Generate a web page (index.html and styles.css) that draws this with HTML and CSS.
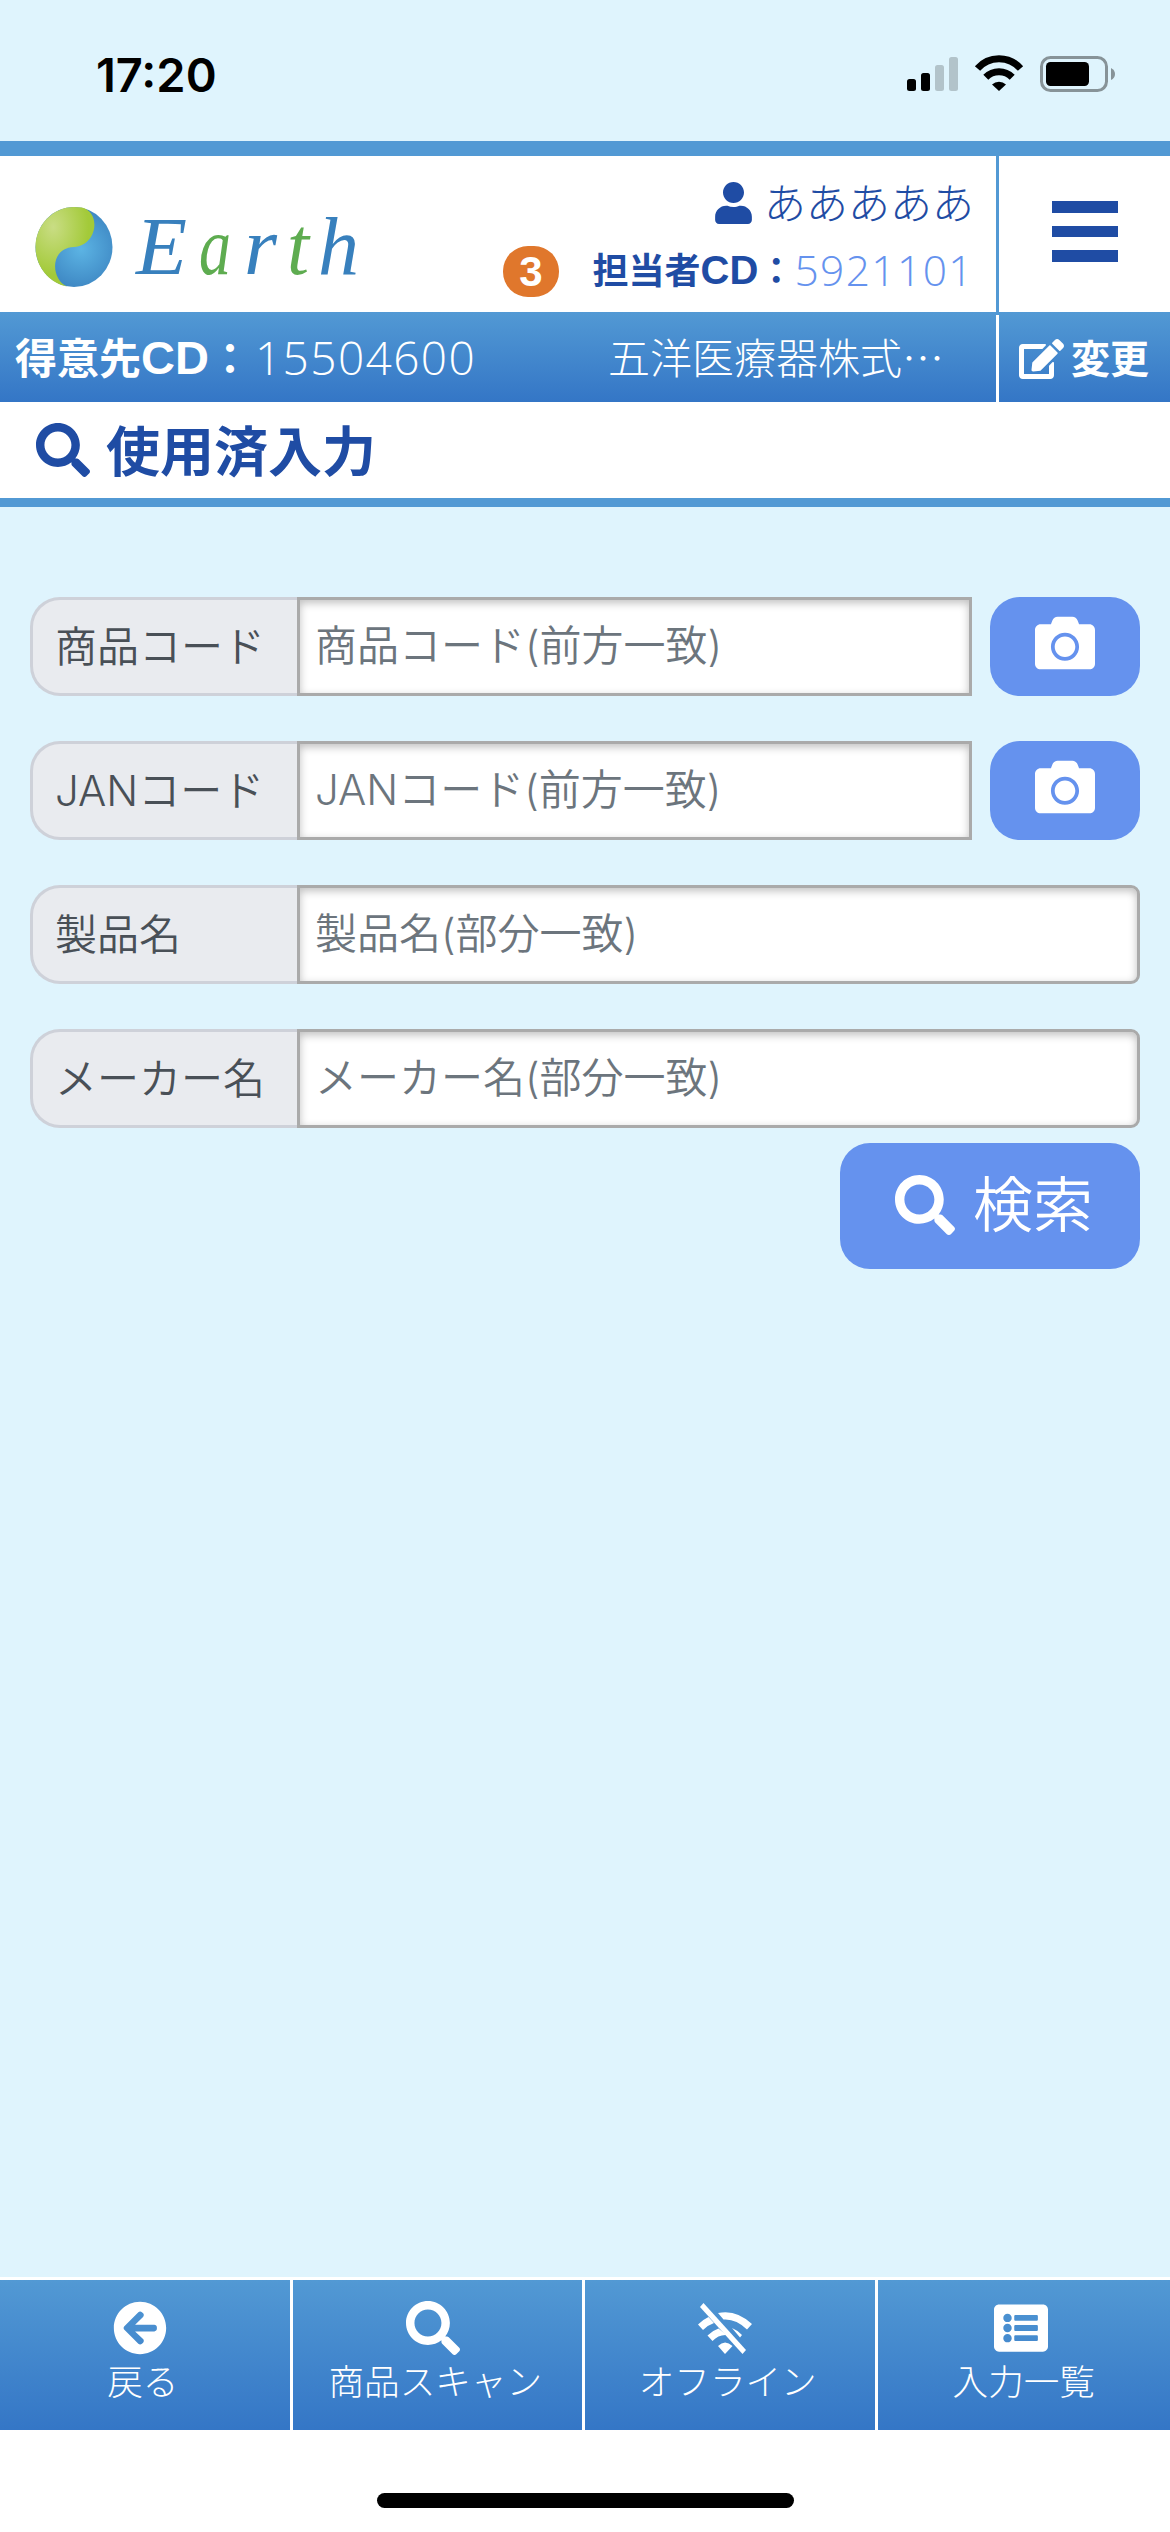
FILE: index.html
```html
<!DOCTYPE html>
<html lang="ja">
<head>
    <meta charset="UTF-8">
    <meta name="viewport" content="width=device-width, initial-scale=1.0">
    <title>使用済入力</title>
    <link rel="stylesheet" href="styles.css">
</head>
<body>
    <!-- shared icons -->
    <svg class="icon-defs" width="0" height="0">
        <symbol id="i-search" viewBox="0 0 512 512"><path d="M505 442.7L405.3 343c-4.5-4.5-10.6-7-17-7H372c27.6-35.3 44-79.7 44-128C416 93.1 322.9 0 208 0S0 93.1 0 208s93.1 208 208 208c48.3 0 92.7-16.4 128-44v16.3c0 6.4 2.5 12.5 7 17l99.7 99.7c9.4 9.4 24.6 9.4 33.9 0l28.3-28.3c9.4-9.4 9.4-24.6.1-34zM208 336c-70.7 0-128-57.2-128-128 0-70.7 57.2-128 128-128 70.7 0 128 57.2 128 128 0 70.7-57.2 128-128 128z"/></symbol>
        <symbol id="i-camera" viewBox="0 0 512 512"><path d="M512 144v288c0 26.5-21.5 48-48 48H48c-26.5 0-48-21.5-48-48V144c0-26.5 21.5-48 48-48h88l12.3-32.9c7-18.7 24.9-31.1 44.9-31.1h125.5c20 0 37.9 12.4 44.9 31.1L376 96h88c26.5 0 48 21.5 48 48zM376 288c0-66.2-53.8-120-120-120s-120 53.8-120 120 53.8 120 120 120 120-53.8 120-120zm-32 0c0 48.5-39.5 88-88 88s-88-39.5-88-88 39.5-88 88-88 88 39.5 88 88z"/></symbol>
    </svg>

    <div class="status-bar">
        <span class="time">17:20</span>
        <svg class="status-icons" width="209" height="38" viewBox="0 0 209 38">
            <rect x="0" y="24" width="9" height="12" rx="2.5"/>
            <rect x="14" y="18" width="9" height="18" rx="2.5"/>
            <g fill="#b2c3ca">
                <rect x="28" y="10" width="9" height="26" rx="2.5"/>
                <rect x="42" y="2" width="9" height="34" rx="2.5"/>
            </g>
            <g fill="none" stroke="#000" stroke-width="7">
                <path d="M70.5 13.5a28.5 28.5 0 0 1 43 0"/>
                <path d="M78.8 22.3a18.5 18.5 0 0 1 26.4 0"/>
            </g>
            <path d="M85 29.5a10.5 10.5 0 0 1 14 0L92 36z"/>
            <rect x="134.5" y="2.5" width="65" height="33" rx="9" fill="none" stroke="#879398" stroke-width="3"/>
            <rect x="139" y="7" width="43" height="24" rx="4.5"/>
            <path d="M204 13q4 2 4 6t-4 6z" fill="#879398"/>
        </svg>
    </div>

    <header class="header">
        <div class="brand">
            <svg width="340" height="100" viewBox="0 -5 340 100">
                <defs>
                    <radialGradient id="leaf" cx="0.3" cy="0.25" r="0.6">
                        <stop offset="0" stop-color="#c9dd84"/>
                        <stop offset="1" stop-color="#a3ca39"/>
                    </radialGradient>
                    <radialGradient id="sea" gradientUnits="userSpaceOnUse" cx="46" cy="44" r="44">
                        <stop offset="0" stop-color="#5cb4e4"/>
                        <stop offset="1" stop-color="#3b83c0"/>
                    </radialGradient>
                </defs>
                <ellipse cx="39" cy="42" rx="38.5" ry="40" fill="url(#sea)"/>
                <path d="M39 2C18 2 .5 20 .5 42c0 20 14 36 31.5 39.5C16 75 14 43 39 42c24-2 27-35 8-39.5Q43 2 39 2z" fill="url(#leaf)"/>
                <g class="brand-text">
                    <text x="101" y="69" textLength="51" lengthAdjust="spacingAndGlyphs">E</text>
                    <text x="164" y="69" textLength="32" lengthAdjust="spacingAndGlyphs" class="green">a</text>
                    <text x="209" y="69" textLength="33" lengthAdjust="spacingAndGlyphs">r</text>
                    <text x="252" y="69" textLength="22" lengthAdjust="spacingAndGlyphs" class="green">t</text>
                    <text x="283" y="69" textLength="41" lengthAdjust="spacingAndGlyphs">h</text>
                </g>
            </svg>
        </div>
        <span class="badge">3</span>
        <div class="user">
            <div class="user-name">
                <svg width="37" height="42" viewBox="0 0 448 512"><path d="M224 256c70.7 0 128-57.3 128-128S294.7 0 224 0 96 57.3 96 128s57.3 128 128 128zm89.6 32h-16.7c-22.2 10.2-46.9 16-72.9 16s-50.6-5.8-72.9-16h-16.7C60.2 288 0 348.2 0 422.4V464c0 26.5 21.5 48 48 48h352c26.5 0 48-21.5 48-48v-41.6c0-74.2-60.2-134.4-134.4-134.4z"/></svg>
                <span>あああああ</span>
            </div>
            <div class="user-code">
                <b>担当者<span class="cd">CD</span>：</b><span class="num">5921101</span>
            </div>
        </div>
        <button class="menu"><i></i><i></i><i></i></button>
    </header>

    <div class="customer">
        <div class="customer-code"><b>得意先<span class="cd">CD</span>：</b><span class="num">15504600</span></div>
        <div class="customer-name">五洋医療器株式…</div>
        <button class="change">
            <svg width="45" height="40" viewBox="0 0 576 512"><path d="M402.6 83.2l90.2 90.2c3.8 3.8 3.8 10 0 13.8L274.4 405.6l-92.8 10.3c-12.4 1.4-22.9-9.1-21.5-21.5l10.3-92.8L388.8 83.2c3.8-3.8 10-3.8 13.8 0zm162-22.9l-48.8-48.8c-15.2-15.2-39.9-15.2-55.2 0l-35.4 35.4c-3.8 3.8-3.8 10 0 13.8l90.2 90.2c3.8 3.8 10 3.8 13.8 0l35.4-35.4c15.2-15.3 15.2-40 0-55.2zM384 346.2V448H64V128h229.8c3.2 0 6.2-1.3 8.5-3.5l40-40c7.6-7.6 2.2-20.5-8.5-20.5H48C21.5 64 0 85.5 0 112v352c0 26.5 21.5 48 48 48h352c26.5 0 48-21.5 48-48V306.2c0-10.7-12.9-16-20.5-8.5l-40 40c-2.2 2.3-3.5 5.3-3.5 8.5z"/></svg>
            <span>変更</span>
        </button>
    </div>

    <h1 class="title">
        <svg width="54" height="54"><use href="#i-search"/></svg>
        <span>使用済入力</span>
    </h1>

    <main class="form">
        <div class="row">
            <label for="itemCode">商品コード</label>
            <input type="text" id="itemCode" placeholder="商品コード(前方一致)">
            <button class="scan"><svg width="60" height="60"><use href="#i-camera"/></svg></button>
        </div>
        <div class="row">
            <label for="janCode">JANコード</label>
            <input type="text" id="janCode" placeholder="JANコード(前方一致)">
            <button class="scan"><svg width="60" height="60"><use href="#i-camera"/></svg></button>
        </div>
        <div class="row">
            <label for="itemName">製品名</label>
            <input type="text" id="itemName" class="last" placeholder="製品名(部分一致)">
        </div>
        <div class="row">
            <label for="maker">メーカー名</label>
            <input type="text" id="maker" class="last" placeholder="メーカー名(部分一致)">
        </div>
        <button class="search">
            <svg width="60" height="60"><use href="#i-search"/></svg>
            <span>検索</span>
        </button>
    </main>

    <nav class="tabs">
        <a class="tab">
            <svg width="54" height="54" viewBox="0 0 512 512"><path d="M256 504C119 504 8 393 8 256S119 8 256 8s248 111 248 248-111 248-248 248zm28.9-143.6L209.4 288H392c13.3 0 24-10.7 24-24v-16c0-13.3-10.7-24-24-24H209.4l75.5-72.4c9.7-9.3 9.9-24.8.4-34.3l-11-10.9c-9.4-9.4-24.6-9.4-33.9 0L107.7 239c-9.4 9.4-9.4 24.6 0 33.9l132.7 132.7c9.4 9.4 24.6 9.4 33.9 0l11-10.9c9.5-9.5 9.3-25-.4-34.3z"/></svg>
            <span>戻る</span>
        </a>
        <a class="tab">
            <svg width="54" height="54"><use href="#i-search"/></svg>
            <span>商品スキャン</span>
        </a>
        <a class="tab">
            <svg width="54" height="54" viewBox="0 0 54 54">
                <path d="M20 12Q38 8 54 23l-5 5.500Q38 17.500 25.500 18.500z"/>
                <path d="M0 23.500q5-5 10.500-7.500l5.500 6q-6 2-11 7z"/>
                <path d="M9.500 34.500q5-5 11-7l8 6.500q-8-.5-14 6z"/>
                <path d="M34 27q6 2.500 10 7l-2 2.500zM20 45q7-7 14.500 0l-7.500 8z"/>
                <path d="M2 6l3.500-4L48 49l-3.500 4z"/>
            </svg>
            <span>オフライン</span>
        </a>
        <a class="tab">
            <svg width="54" height="54" viewBox="0 0 512 512"><path d="M464 480H48c-26.5 0-48-21.5-48-48V80c0-26.5 21.5-48 48-48h416c26.5 0 48 21.5 48 48v352c0 26.5-21.5 48-48 48zM128 120c-22.1 0-40 17.9-40 40s17.9 40 40 40 40-17.9 40-40-17.9-40-40-40zm0 96c-22.1 0-40 17.9-40 40s17.9 40 40 40 40-17.9 40-40-17.9-40-40-40zm0 96c-22.1 0-40 17.9-40 40s17.9 40 40 40 40-17.9 40-40-17.9-40-40-40zm288-136v-32c0-6.6-5.4-12-12-12H204c-6.6 0-12 5.4-12 12v32c0 6.6 5.4 12 12 12h200c6.6 0 12-5.4 12-12zm0 96v-32c0-6.6-5.4-12-12-12H204c-6.6 0-12 5.4-12 12v32c0 6.6 5.4 12 12 12h200c6.6 0 12-5.4 12-12zm0 96v-32c0-6.6-5.4-12-12-12H204c-6.6 0-12 5.4-12 12v32c0 6.6 5.4 12 12 12h200c6.6 0 12-5.4 12-12z"/></svg>
            <span>入力一覧</span>
        </a>
    </nav>
    <div class="home-area"><div class="home-bar"></div></div>
</body>
</html>
```
FILE: styles.css
```css
* {
    box-sizing: border-box;
}
body {
    margin: 0;
    height: 2532px;
    display: flex;
    flex-direction: column;
    background: #dff4fd;
    font-family: "Noto Sans CJK JP", sans-serif;
    font-weight: 300;
    font-size: 42px;
    line-height: 1;
    white-space: nowrap;
    overflow: hidden;
}
svg {
    display: block;
    flex: none;
    fill: currentColor;
    overflow: visible;
}
b {
    font-weight: bold;
}
button {
    border: 0;
    padding: 0;
    background: none;
    color: inherit;
    font: inherit;
}
.icon-defs {
    position: absolute;
}
.num {
    font-family: "Open Sans", sans-serif;
    letter-spacing: 1.4px;
}
.cd {
    font-family: "Liberation Sans", sans-serif;
}

/* status bar */
.status-bar {
    height: 141px;
    padding: 0 53px 0 96px;
    display: flex;
    justify-content: space-between;
    align-items: flex-start;
}
.time {
    margin-top: 51px;
    font-family: Inter, sans-serif;
    font-weight: 600;
    font-size: 47px;
}
.status-icons {
    margin-top: 55px;
    margin-right: 1px;
}

/* header */
.header {
    height: 171px;
    display: flex;
    border-top: 15px solid #5299d4;
    background: #fff;
    color: #1f4ca4;
}
.brand {
    padding: 44px 0 0 35px;
    width: 503px;
}
.brand-text {
    font-family: "Liberation Serif", serif;
    font-style: italic;
    font-size: 83px;
    fill: #3880bd;
}
.green {
    fill: #5eac50;
}
.badge {
    width: 56px;
    height: 51px;
    margin-top: 90px;
    border-radius: 25px;
    background: #e0772c;
    color: #fff;
    font-family: "Liberation Sans", sans-serif;
    font-weight: bold;
    line-height: 52px;
    text-align: center;
}
.user {
    flex: 1;
    padding: 26px 22px 0 0;
}
.user-name {
    display: flex;
    justify-content: flex-end;
    align-items: center;
    gap: 12px;
    height: 42px;
}
.user-name span {
    margin-top: -4px;
}
.user-code {
    display: flex;
    justify-content: flex-end;
    align-items: center;
    margin-top: 25px;
    height: 42px;
    font-size: 36px;
}
.user-code .cd {
    font-size: 40px;
}
.user-code .num {
    font-size: 42.5px;
    color: #6592ee;
}
.menu {
    width: 174px;
    border-left: 3px solid #5299d4;
    display: flex;
    flex-direction: column;
    align-items: center;
    justify-content: flex-start;
    gap: 13px;
    padding-top: 45px;
}
.menu i {
    width: 66px;
    height: 11.5px;
    background: #1f4ca4;
}

/* customer bar */
.customer {
    height: 90px;
    display: flex;
    align-items: center;
    background: linear-gradient(#5299d4, #3476c6);
    color: #fff;
}
.customer-code {
    display: flex;
    align-items: center;
    width: 608px;
    padding-left: 15px;
}
.customer-code b {
    margin-right: 4px;
}
.customer-code .cd {
    font-size: 47px;
}
.customer-code .num {
    font-size: 46px;
}
.customer-name {
    width: 388px;
    margin-top: -3px;
}
.change {
    align-self: flex-end;
    width: 174px;
    height: 87px;
    border-left: 3px solid #fff;
    padding-left: 20px;
    display: flex;
    align-items: center;
    gap: 7px;
    font-size: 39px;
    font-weight: bold;
}
.change span {
    margin-top: -4px;
}

.title {
    margin: 0;
    height: 105px;
    padding-left: 36px;
    display: flex;
    align-items: center;
    gap: 16px;
    background: #fff;
    border-bottom: 9px solid #5299d4;
    color: #1f4ca4;
    font-size: 54px;
    font-weight: bold;
}
.title span {
    margin-top: -3px;
}

/* form */
.form {
    flex: 1;
    padding: 90px 30px 0;
    display: flex;
    flex-direction: column;
    font-family: Inter, "Noto Sans CJK JP", sans-serif;
    font-weight: 350;
}
.row {
    display: flex;
    height: 99px;
    margin-bottom: 45px;
}
.row label {
    width: 267px;
    padding-left: 22px;
    border: 3px solid #ced1d9;
    border-right: 0;
    border-radius: 30px 0 0 30px;
    background: #e9ebef;
    color: #495057;
    line-height: 94px;
}
.row input {
    flex: 1;
    min-width: 0;
    padding: 0 16px 2px 15px;
    border: 3px solid #aaa;
    border-radius: 0;
    background: #fff;
    box-shadow: inset 0 3px 9px rgba(0, 0, 0, 0.25);
    font: inherit;
}
.row input::placeholder {
    color: #6c757d;
    opacity: 1;
}
.row .last {
    border-radius: 0 9px 9px 0;
}
.scan {
    width: 150px;
    margin-left: 18px;
    display: flex;
    justify-content: center;
    padding-top: 16px;
    border-radius: 30px;
    background: #6592ee;
    color: #fff;
}
.search {
    align-self: flex-end;
    width: 300px;
    height: 126px;
    margin-top: -30px;
    padding: 0 0 3px 8px;
    display: flex;
    align-items: center;
    justify-content: center;
    gap: 18px;
    border-radius: 30px;
    background: #6592ee;
    color: #fff;
    font-size: 60px;
}

/* bottom tabs */
.tabs {
    display: grid;
    grid-template-columns: repeat(4, 1fr);
    height: 153px;
    border-top: 3px solid #fff;
    background: linear-gradient(#5299d4, #3476c6);
    color: #fff;
    font-size: 35.6px;
}
.tab {
    display: flex;
    flex-direction: column;
    align-items: center;
    padding: 21px 4px 0 0;
    gap: 7px;
    border-right: 3px solid #fff;
}
.tab svg {
    margin-right: 5px;
}
.tab:last-child {
    padding-right: 0;
    border-right: 0;
}
.home-area {
    height: 102px;
    padding-top: 63px;
    background: #fff;
}
.home-bar {
    width: 417px;
    height: 15px;
    margin: 0 auto;
    border-radius: 8px;
    background: #000;
}
```
